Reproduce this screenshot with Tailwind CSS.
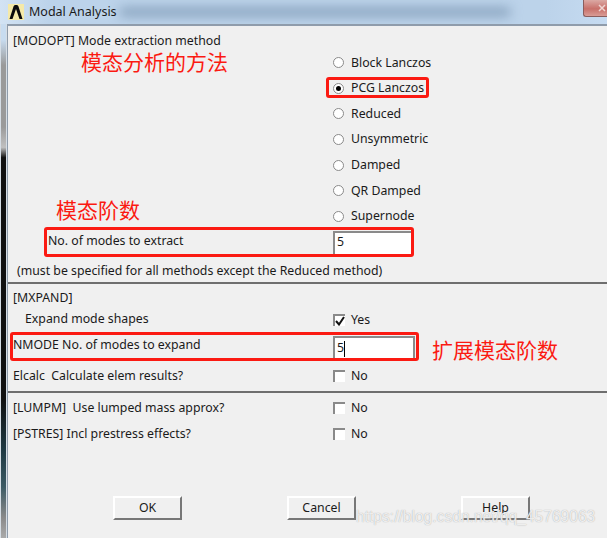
<!DOCTYPE html>
<html lang="en">
<head>
    <meta charset="UTF-8">
    <title>Modal Analysis</title>
    <script src="https://cdn.jsdelivr.net/npm/@tailwindcss/browser@4"></script>
</head>
<body class="w-[607px] h-[538px] overflow-hidden bg-[#f0f0f0] font-['Noto_Sans','Noto_Sans_CJK_SC',sans-serif] text-[12.3px] text-[#1a1a1a]">
<div class="relative w-[607px] h-[538px] flex flex-col overflow-hidden">

    <!-- Title bar -->
    <div class="relative h-[24px] shrink-0 flex items-center gap-[5px] pl-[8px] overflow-hidden bg-[linear-gradient(90deg,#d3e3f3_0%,#bcd3ea_8%,#bcd3ea_90%,#c6dbf1_100%)]">
        <div class="absolute left-[120px] top-[8px] w-[390px] h-[8px] bg-[#7f9ab6] blur-[6px]"></div>
        <svg class="relative" width="16" height="16" viewBox="0 0 16 16">
            <rect width="16" height="16" fill="#f5e9a8"/>
            <path d="M1.5 15 L5.5 2.5 Q6 1 7 1 H9 Q10 1 10.5 2.5 L14.5 15 H11.5 L8 5 L4.5 15 Z" fill="#0c0c0c"/>
        </svg>
        <span class="relative text-[12.5px] leading-none">Modal Analysis</span>
        <div class="absolute right-0 top-0 w-[24px] h-[17px] rounded-bl-[3px] bg-[linear-gradient(180deg,#dba9a4,#c8706a_55%,#d99c96)] border-l border-b border-[#8a5d5d] flex items-center justify-end pr-[1px]">
            <svg width="8" height="8" viewBox="0 0 8 8"><path d="M1 1 L7 7 M7 1 L1 7" stroke="#f0d5d2" stroke-width="1.5"/></svg>
        </div>
    </div>

    <div class="flex flex-1 min-h-0">
        <!-- Left window frame -->
        <div class="w-[7px] shrink-0 border-l border-r border-[#d5dde5] bg-[linear-gradient(180deg,#c8dcf0_0%,#c8dcf0_3%,#9a9a9a_8%,#9a9a9a_20%,#c0c0c0_24%,#111_26%,#111_73%,#1f3a44_83%,#3c5a64_90%,#8a8a8a_96%,#aaa_100%)]"></div>

        <!-- Dialog body -->
        <div class="flex-1 flex flex-col border-t-2 border-l border-[#8f9cab]">

            <!-- MODOPT section -->
            <section class="h-[258px] shrink-0 border-b-2 border-[#6e6e6e] flex flex-col">
                <div class="h-[23px] pt-[6px] pl-[5px]">[MODOPT] Mode extraction method</div>
                <div class="flex flex-col pl-[325px] pt-[1px] h-[178px]">
                    <div class="h-[25.6px] shrink-0 flex items-center gap-[7px]"><span class="w-[11px] h-[11px] rounded-full bg-white border border-[#8a8a8a]"></span>Block Lanczos</div>
                    <div class="h-[25.6px] shrink-0 flex items-center gap-[7px]"><span class="w-[11px] h-[11px] rounded-full bg-white border border-[#8a8a8a] flex items-center justify-center"><span class="w-[5px] h-[5px] rounded-full bg-black"></span></span>PCG Lanczos</div>
                    <div class="h-[25.6px] shrink-0 flex items-center gap-[7px]"><span class="w-[11px] h-[11px] rounded-full bg-white border border-[#8a8a8a]"></span>Reduced</div>
                    <div class="h-[25.6px] shrink-0 flex items-center gap-[7px]"><span class="w-[11px] h-[11px] rounded-full bg-white border border-[#8a8a8a]"></span>Unsymmetric</div>
                    <div class="h-[25.6px] shrink-0 flex items-center gap-[7px]"><span class="w-[11px] h-[11px] rounded-full bg-white border border-[#8a8a8a]"></span>Damped</div>
                    <div class="h-[25.6px] shrink-0 flex items-center gap-[7px]"><span class="w-[11px] h-[11px] rounded-full bg-white border border-[#8a8a8a]"></span>QR Damped</div>
                    <div class="h-[25.6px] shrink-0 flex items-center gap-[7px]"><span class="w-[11px] h-[11px] rounded-full bg-white border border-[#8a8a8a]"></span>Supernode</div>
                </div>
                <div class="h-[26px] flex items-center pl-[40px]">
                    <span class="w-[285px] pt-[2px]">No. of modes to extract</span>
                    <span class="w-[79px] h-[24px] mt-[5px] bg-white border-t-2 border-l-2 border-[#8a8a8a] pl-[2px] leading-[18px]">5</span>
                </div>
                <div class="pl-[9px] pt-[9px]">(must be specified for all methods except the Reduced method)</div>
            </section>

            <!-- MXPAND section -->
            <section class="h-[109px] shrink-0 border-b-2 border-[#6e6e6e] flex flex-col">
                <div class="h-[26px] flex items-center pl-[5px] pt-[2px]">[MXPAND]</div>
                <div class="h-[16px] flex items-center pl-[17px]">
                    <span class="w-[308px] pt-[2px]">Expand mode shapes</span>
                    <span class="w-[12px] h-[12px] mt-[3px] bg-white border-t-2 border-l-2 border-[#8a8a8a] flex items-center justify-center">
                        <svg width="10" height="10" viewBox="0 0 10 10"><path d="M1 5 L4 8.5 L9 1" fill="none" stroke="#111" stroke-width="2"/></svg>
                    </span>
                    <span class="pl-[6px] mt-[4px]">Yes</span>
                </div>
                <div class="h-[36px] flex items-center pl-[5px]">
                    <span class="w-[320px] pt-[2px]">NMODE No. of modes to expand</span>
                    <span class="w-[82px] h-[24px] mt-[7px] bg-white border-t-2 border-l-2 border-r-2 border-[#8a8a8a] pl-[2px] flex items-center">5<span class="w-px h-[16px] bg-black"></span></span>
                </div>
                <div class="h-[26px] flex items-center pl-[5px]">
                    <span class="w-[320px] pt-[2px]">Elcalc&nbsp; Calculate elem results?</span>
                    <span class="w-[12px] h-[12px] mt-[1px] bg-white border-t-2 border-l-2 border-[#8a8a8a]"></span>
                    <span class="pl-[6px] pt-[2px]">No</span>
                </div>
            </section>

            <!-- LUMPM / PSTRES -->
            <section class="flex flex-col pt-[1px]">
                <div class="h-[26px] flex items-center pl-[5px]">
                    <span class="w-[320px] pt-[2px]">[LUMPM]&nbsp; Use lumped mass approx?</span>
                    <span class="w-[12px] h-[12px] mt-[1px] bg-white border-t-2 border-l-2 border-[#8a8a8a]"></span>
                    <span class="pl-[6px] pt-[2px]">No</span>
                </div>
                <div class="h-[26px] flex items-center pl-[5px]">
                    <span class="w-[320px] pt-[2px]">[PSTRES] Incl prestress effects?</span>
                    <span class="w-[12px] h-[12px] mt-[1px] bg-white border-t-2 border-l-2 border-[#8a8a8a]"></span>
                    <span class="pl-[6px] pt-[2px]">No</span>
                </div>
            </section>

            <!-- Buttons -->
            <div class="flex pl-[105px] gap-[105px] pt-[50px]">
                <button class="w-[69px] h-[24px] bg-[#f0f0f0] border-2 border-t-white border-l-white border-r-[#777] border-b-[#777]">OK</button>
                <button class="w-[69px] h-[24px] bg-[#f0f0f0] border-2 border-t-white border-l-white border-r-[#777] border-b-[#777]">Cancel</button>
                <button class="w-[69px] h-[24px] bg-[#f0f0f0] border-2 border-t-white border-l-white border-r-[#777] border-b-[#777]">Help</button>
            </div>
        </div>
    </div>

    <!-- Red annotation boxes -->
    <div class="absolute left-[326px] top-[77px] w-[103px] h-[21px] border-[3px] border-[#fb1a12] rounded-[3px]"></div>
    <div class="absolute left-[44px] top-[227px] w-[370px] h-[30px] border-[3px] border-[#fb1a12] rounded-[3px]"></div>
    <div class="absolute left-[10px] top-[332px] w-[409px] h-[29px] border-[3px] border-[#fb1a12] rounded-[3px]"></div>

    <!-- Red annotation labels -->
    <div class="absolute left-[81px] top-[49px] text-[21px] leading-[26px] text-[#fb1a12]">模态分析的方法</div>
    <div class="absolute left-[56px] top-[197px] text-[21px] leading-[26px] text-[#fb1a12]">模态阶数</div>
    <div class="absolute left-[432px] top-[337px] text-[21px] leading-[26px] text-[#fb1a12]">扩展模态阶数</div>

    <!-- Watermark -->
    <div class="absolute left-[356px] top-[507px] font-['Liberation_Sans',sans-serif] text-[15.6px] leading-[20px] text-white/80 [text-shadow:0_0_1px_#999]">https://blog.csdn.net/qq_45769063</div>
</div>
</body>
</html>
